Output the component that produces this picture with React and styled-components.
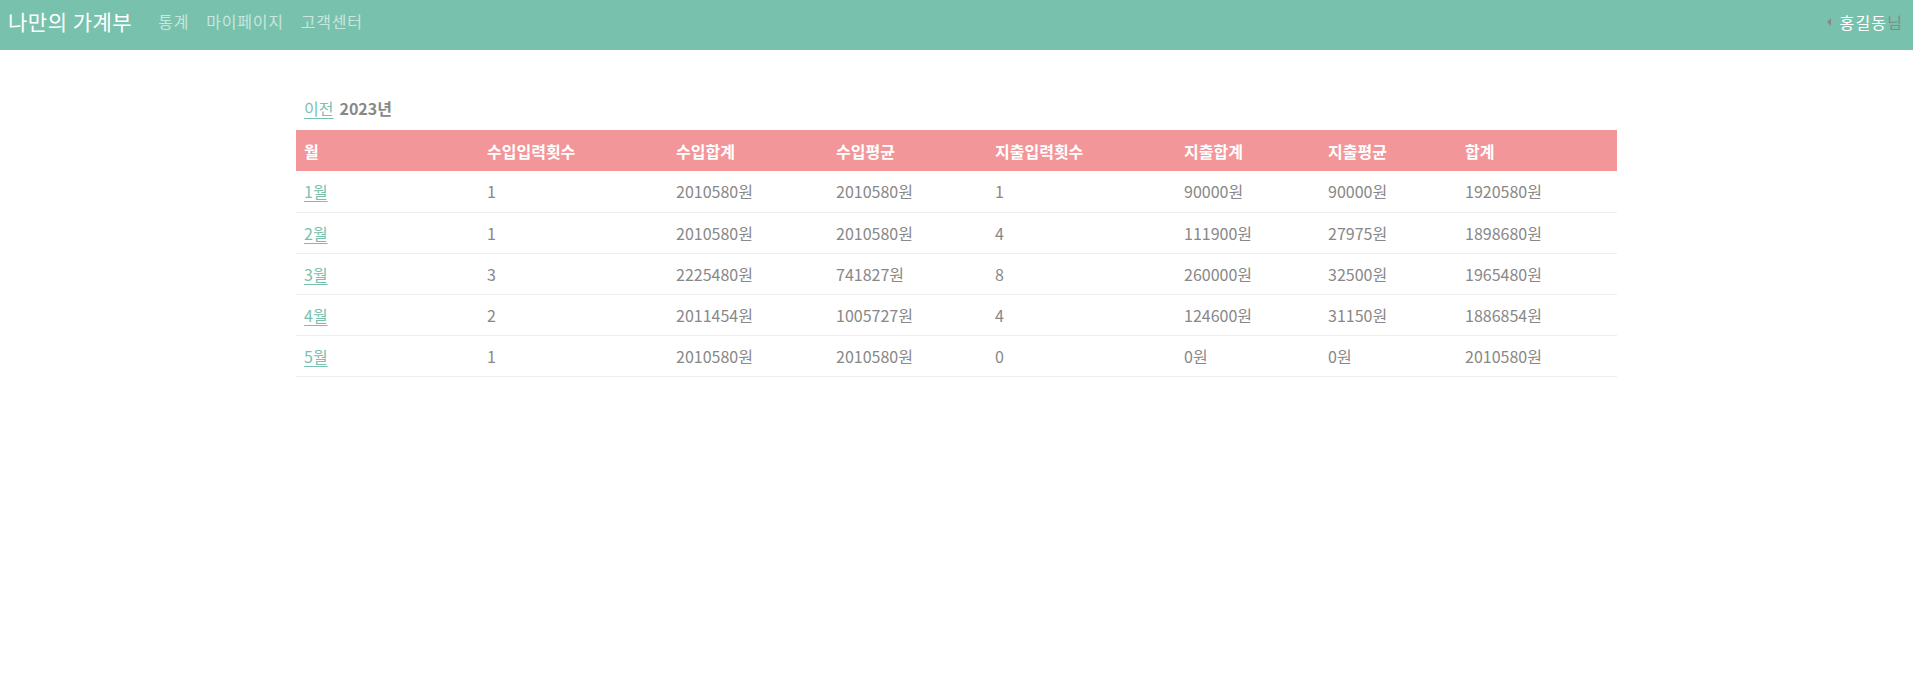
import React from "react";
import styled, { createGlobalStyle } from "styled-components";

const Global = createGlobalStyle`
  html, body { margin: 0; padding: 0; background: #fff; }
  body {
    font-family: "Noto Sans CJK KR", "Noto Sans", sans-serif;
    color: #888;
    font-size: 16px;
  }
`;

const Nav = styled.nav`
  height: 50px;
  background: #78c2ad;
  display: flex;
  align-items: center;
  padding: 0 11px 0 8px;
  box-sizing: border-box;
`;

const Brand = styled.a`
  color: #fff;
  font-size: 21px;
  letter-spacing: 0.5px;
  margin-right: 26px;
  text-decoration: none;
  line-height: 1;
  padding-bottom: 8px;
`;

const NavLink = styled.a`
  color: rgba(255, 255, 255, 0.6);
  font-size: 16px;
  letter-spacing: 0.8px;
  margin-right: 17px;
  text-decoration: none;
  line-height: 1;
  padding-bottom: 8px;
`;

const Spacer = styled.div`
  flex: 1;
`;

const User = styled.div`
  display: flex;
  align-items: center;
  line-height: 1;
  padding-bottom: 7px;
  font-size: 16px;
  letter-spacing: 1.2px;
`;

const Caret = styled.span`
  width: 0;
  height: 0;
  border-top: 4px solid transparent;
  border-bottom: 4px solid transparent;
  border-right: 4px solid #888;
  margin-right: 9px;
`;

const UserName = styled.span`
  color: #fff;
`;

const Suffix = styled.span`
  color: #888;
  letter-spacing: 0;
`;

const Main = styled.main`
  width: 1321px;
  margin: 0 auto;
  padding-top: 46px;
`;

const Title = styled.div`
  height: 24px;
  line-height: 24px;
  padding-left: 8px;
  margin-bottom: 10px;
  display: flex;
  gap: 6px;
`;

const Link = styled.a`
  color: #78c2ad;
  text-decoration: underline;
  text-underline-offset: 3px;
`;

const Year = styled.span`
  font-weight: 700;
  color: #888;
`;

const Table = styled.table`
  width: 100%;
  border-collapse: collapse;
  table-layout: fixed;
`;

const Th = styled.th`
  background: #f3969a;
  color: #fff;
  font-weight: 700;
  text-align: left;
  height: 41px;
  padding: 0 8px;
  box-sizing: border-box;
  width: ${(p) => p.$w}px;
`;

const Td = styled.td`
  height: 41px;
  padding: 0 8px;
  color: #888;
  border-bottom: 1px solid #eeeeee;
  box-sizing: border-box;
`;

const cols = [
  ["월", 183],
  ["수입입력횟수", 189],
  ["수입합계", 160],
  ["수입평균", 159],
  ["지출입력횟수", 189],
  ["지출합계", 144],
  ["지출평균", 137],
  ["합계", 160],
];

const rows = [
  ["1월", "1", "2010580원", "2010580원", "1", "90000원", "90000원", "1920580원"],
  ["2월", "1", "2010580원", "2010580원", "4", "111900원", "27975원", "1898680원"],
  ["3월", "3", "2225480원", "741827원", "8", "260000원", "32500원", "1965480원"],
  ["4월", "2", "2011454원", "1005727원", "4", "124600원", "31150원", "1886854원"],
  ["5월", "1", "2010580원", "2010580원", "0", "0원", "0원", "2010580원"],
];

export default function App() {
  return (
    <>
      <Global />
      <Nav>
        <Brand href="#">나만의 가계부</Brand>
        <NavLink href="#">통계</NavLink>
        <NavLink href="#">마이페이지</NavLink>
        <NavLink href="#">고객센터</NavLink>
        <Spacer />
        <User>
          <Caret />
          <UserName>홍길동</UserName>
          <Suffix>님</Suffix>
        </User>
      </Nav>
      <Main>
        <Title>
          <Link href="#">이전</Link>
          <Year>2023년</Year>
        </Title>
        <Table>
          <thead>
            <tr>
              {cols.map(([c, w]) => (
                <Th key={c} $w={w}>{c}</Th>
              ))}
            </tr>
          </thead>
          <tbody>
            {rows.map((r) => (
              <tr key={r[0]}>
                <Td><Link href="#">{r[0]}</Link></Td>
                {r.slice(1).map((v, i) => (
                  <Td key={i}>{v}</Td>
                ))}
              </tr>
            ))}
          </tbody>
        </Table>
      </Main>
    </>
  );
}
